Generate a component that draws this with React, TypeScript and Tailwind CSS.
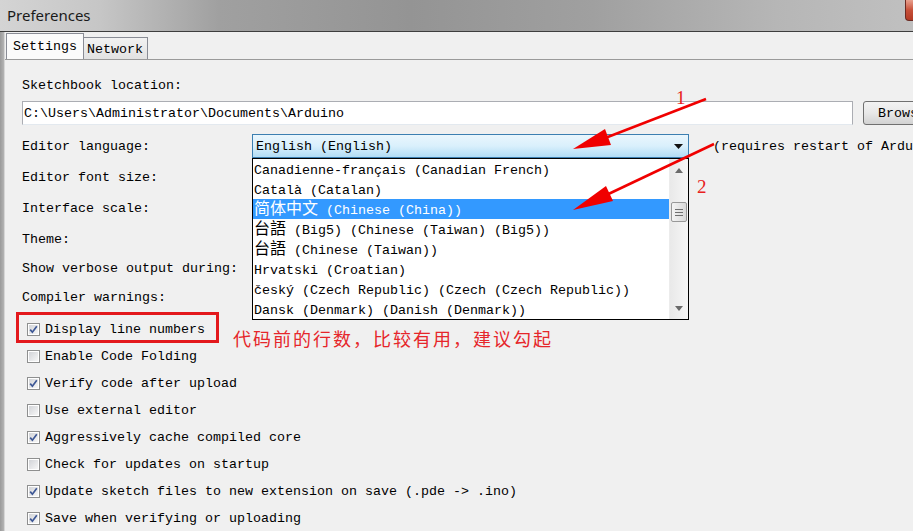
import React from 'react';

const mono = "font-['Liberation_Mono','Noto_Sans_CJK_SC',monospace]";

interface LangItem {
    cjk: string;
    rest: string;
}

const languages: LangItem[] = [
    { cjk: '', rest: 'Canadienne-français (Canadian French)' },
    { cjk: '', rest: 'Català (Catalan)' },
    { cjk: '简体中文', rest: ' (Chinese (China))' },
    { cjk: '台語', rest: ' (Big5) (Chinese (Taiwan) (Big5))' },
    { cjk: '台語', rest: ' (Chinese (Taiwan))' },
    { cjk: '', rest: 'Hrvatski (Croatian)' },
    { cjk: '', rest: 'český (Czech Republic) (Czech (Czech Republic))' },
    { cjk: '', rest: 'Dansk (Denmark) (Danish (Denmark))' },
];

const options: [string, boolean][] = [
    ['Display line numbers', true],
    ['Enable Code Folding', false],
    ['Verify code after upload', true],
    ['Use external editor', false],
    ['Aggressively cache compiled core', true],
    ['Check for updates on startup', false],
    ['Update sketch files to new extension on save (.pde -> .ino)', true],
    ['Save when verifying or uploading', true],
];

const Checkbox = ({ checked }: { checked: boolean }) => (
    <div className="w-[13px] h-[13px] border border-[#8e8f8f] bg-white p-[1px] shrink-0">
        <div className="w-full h-full bg-gradient-to-br from-[#d2d4d8] to-[#f7f7f7] relative">
            {checked && (
                <svg viewBox="0 0 11 11" className="absolute -left-[1px] -top-[1px] w-[11px] h-[11px]">
                    <path d="M2.2 5.6 L4.4 8.2 L8.8 2.2" fill="none" stroke="#3d5795" strokeWidth="1.7" />
                </svg>
            )}
        </div>
    </div>
);

const LanguageList = () => (
    <div className="absolute top-full left-0 w-[437px] h-[162px] border border-black bg-white flex z-10">
        <div className="flex-1 flex flex-col">
            {languages.map((l, i) => (
                <div
                    key={l.rest + i}
                    className={`h-[20px] flex items-center whitespace-nowrap pl-[1px] pt-[3px] ${i === 2 ? 'bg-[#3399ff] text-white' : 'text-black'}`}
                >
                    {l.cjk && <span className="text-[16px] leading-none -mt-[2px]">{l.cjk}</span>}
                    <span className="whitespace-pre">{l.rest}</span>
                </div>
            ))}
        </div>
        <div className="w-[19px] shrink-0 border-l border-[#ececec] bg-gradient-to-r from-[#e9e9e9] to-[#f6f6f6] flex flex-col">
            <div className="h-[22px] flex items-center justify-center">
                <svg width="8" height="5" viewBox="0 0 8 5"><polygon points="4,0 8,5 0,5" fill="#6a6a6a" /></svg>
            </div>
            <div className="mt-[21px] mx-[1px] h-[20px] rounded-[2px] border border-[#989898] bg-gradient-to-r from-[#f4f4f4] to-[#d8d8d8] flex flex-col items-center justify-center gap-[2px]">
                <div className="w-[8px] h-px bg-[#6f6f6f]" />
                <div className="w-[8px] h-px bg-[#6f6f6f]" />
                <div className="w-[8px] h-px bg-[#6f6f6f]" />
            </div>
            <div className="flex-1" />
            <div className="h-[22px] flex items-center justify-center">
                <svg width="8" height="5" viewBox="0 0 8 5"><polygon points="0,0 8,0 4,5" fill="#6a6a6a" /></svg>
            </div>
        </div>
    </div>
);

const Annotations = () => (
    <svg className="absolute left-0 top-0 pointer-events-none z-20" width="913" height="531" viewBox="0 0 913 531">
        <line x1="706" y1="99" x2="600" y2="140" stroke="#f00000" strokeWidth="2.5" />
        <polygon points="573,149 605,129 611,145" fill="#f00000" />
        <line x1="714" y1="144" x2="600" y2="198" stroke="#f00000" strokeWidth="2.5" />
        <polygon points="573,210 606,186 613,201" fill="#f00000" />
        <text x="676" y="104" fill="#e82020" fontSize="19" fontFamily="Liberation Serif, serif">1</text>
        <text x="697" y="193" fill="#e82020" fontSize="19" fontFamily="Liberation Serif, serif">2</text>
    </svg>
);

const App = () => {
    return (
        <div className={`w-[913px] h-[531px] relative overflow-hidden bg-[#f0f0f0] ${mono} text-[13.33px] leading-[20px] text-black`}>
            {/* title bar */}
            <div className="h-[31px] flex items-start bg-[linear-gradient(90deg,#d4d4d4_0%,#c6c6c6_11%,#a0a0a0_24%,#949494_45%,#a0a0a0_65%,#b6b6b6_85%,#c0c0c0_100%)]">
                <div className="pl-[7px] pt-[5px] font-['Noto_Sans',sans-serif] text-[15px] leading-[20px] text-[#1a1a1a]">Preferences</div>
                <div className="ml-auto w-[8px] h-[21px] shrink-0 rounded-bl-[4px] border-l border-b border-[#6b2a22] bg-gradient-to-b from-[#e8a08e] via-[#c75039] to-[#b33a25]" />
            </div>
            <div className="h-px bg-[#3e3e3e]" />

            <div className="flex h-[499px]">
                <div className="w-[4px] shrink-0 bg-gradient-to-r from-[#9a9a9a] to-[#b4b4b4]" />
                <div className="w-px shrink-0 bg-[#d6d6d6]" />
                <div className="flex-1 min-w-0 flex flex-col">
                    {/* tabs */}
                    <div className="h-[27px] flex items-end pl-[1px]">
                        <div className="h-[26px] w-[78px] shrink-0 border border-b-0 border-[#898c95] bg-[#fbfbfb] pl-[6px] pt-[3px]">Settings</div>
                        <div className="h-[22px] w-[64px] shrink-0 border border-l-0 border-b-0 border-[#898c95] bg-gradient-to-b from-[#f2f2f2] to-[#e2e2e2] pl-[3px] pt-[2px]">Network</div>
                    </div>
                    {/* panel */}
                    <div className="flex-1 border-t border-[#9a9a9a] pl-[17px] flex flex-col">
                        <div className="mt-[16px] h-[20px]">Sketchbook location:</div>
                        <div className="mt-[5px] h-[24px] flex">
                            <div className="w-[831px] h-[24px] shrink-0 border border-[#abadb3] border-b-[#e3e9ef] bg-white pl-[1px] pt-[1px] flex items-center">
                                C:\Users\Administrator\Documents\Arduino
                            </div>
                            <div className="ml-[10px] w-[80px] h-[24px] shrink-0 rounded-[3px] border border-[#707070] bg-gradient-to-b from-[#f3f3f3] via-[#e8e8e8] to-[#d2d2d2] pl-[14px] pt-[1px] flex items-center">
                                Browse
                            </div>
                        </div>
                        <div className="mt-[9px] h-[24px] flex items-center whitespace-nowrap">
                            <div className="w-[230px] shrink-0 pt-[2px]">Editor language:</div>
                            <div className="relative w-[437px] h-[24px] shrink-0">
                                <div className="w-full h-full border border-[#3c7fb1] bg-gradient-to-b from-[#eaf6fd] via-[#d9f0fc] to-[#b2dcf4] flex items-center pl-[3px] pr-[5px]">
                                    <span className="flex-1 pt-[2px]">English (English)</span>
                                    <svg width="9" height="5" viewBox="0 0 9 5"><polygon points="0,0 9,0 4.5,5" fill="#111" /></svg>
                                </div>
                                <LanguageList />
                            </div>
                            <div className="ml-[24px] shrink-0 pt-[2px]">(requires restart of Arduino)</div>
                        </div>
                        <div className="mt-[10px] h-[20px]">Editor font size:</div>
                        <div className="mt-[11px] h-[20px]">Interface scale:</div>
                        <div className="mt-[11px] h-[20px]">Theme:</div>
                        <div className="mt-[9px] h-[20px]">Show verbose output during:</div>
                        <div className="mt-[9px] h-[20px]">Compiler warnings:</div>
                        <div className="mt-[11px] flex flex-col gap-[7px]">
                            {options.map(([label, checked]) => (
                                <div key={label} className="h-[20px] flex items-center pl-[5px] whitespace-nowrap">
                                    <Checkbox checked={checked} />
                                    <span className="ml-[5px] pt-[2px]">{label}</span>
                                </div>
                            ))}
                        </div>
                    </div>
                </div>
            </div>

            {/* red annotation box + note */}
            <div className="absolute left-[16px] top-[312px] w-[203px] h-[31px] border-[3px] border-[#e3181c] z-20" />
            <div className="absolute left-[233px] top-[328px] text-[18px] leading-[20px] tracking-[2px] text-[#e6262a] font-['Noto_Sans_CJK_SC',sans-serif] whitespace-nowrap z-20">
                代码前的行数，比较有用，建议勾起
            </div>
            <Annotations />
        </div>
    );
};

export default App;
